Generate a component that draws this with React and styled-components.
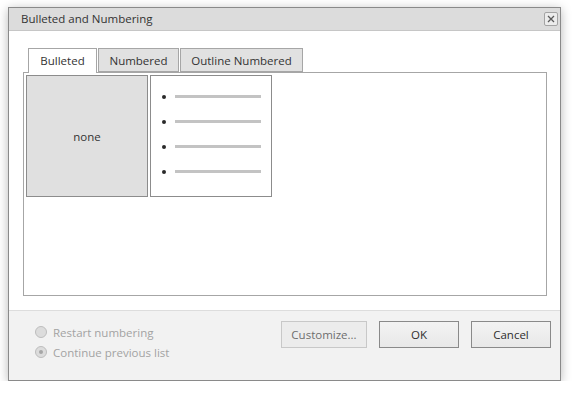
import React from "react";
import styled, { createGlobalStyle } from "styled-components";

const GlobalStyle = createGlobalStyle`
  html, body { margin: 0; padding: 0; background: #ffffff; }
  body { font-family: "Open Sans", "Liberation Sans", sans-serif; font-size: 11.5px; color: #333333; }
  * { box-sizing: border-box; }
`;

const Page = styled.div`
  padding: 7px 0 0 8px;
`;

const Dialog = styled.div`
  width: 553px;
  height: 374px;
  border: 1px solid #8a8a8a;
  background: #ffffff;
  box-shadow: 0 2px 10px rgba(0, 0, 0, 0.28);
  display: flex;
  flex-direction: column;
`;

const TitleBar = styled.div`
  height: 23px;
  flex: none;
  background: #dcdcdc;
  border-bottom: 1px solid #c6c6c6;
  display: flex;
  align-items: center;
  padding: 0 2px 0 12px;
`;

const Title = styled.div`
  flex: 1;
  color: #333333;
  font-size: 11.5px;
  line-height: 22px;
`;

const CloseButton = styled.button`
  width: 14px;
  height: 14px;
  padding: 0;
  margin: 0;
  border: 1px solid #a4a4a4;
  border-radius: 2px;
  background: #ececec;
  display: flex;
  align-items: center;
  justify-content: center;
`;

const Body = styled.div`
  height: 279px;
  flex: none;
  padding: 17px 13px 0 14px;
  display: flex;
  flex-direction: column;
`;

const TabList = styled.div`
  display: flex;
  gap: 1px;
  margin-left: 5px;
  height: 24px;
  position: relative;
  z-index: 1;
`;

const Tab = styled.div`
  width: ${(p) => p.$width}px;
  height: ${(p) => (p.$active ? "25px" : "24px")};
  border: 1px solid #a6a6a6;
  border-bottom: ${(p) => (p.$active ? "none" : "1px solid #a6a6a6")};
  background: ${(p) => (p.$active ? "#ffffff" : "#e1e1e1")};
  color: #333333;
  font-size: 11.5px;
  display: flex;
  align-items: center;
  justify-content: center;
  padding-bottom: ${(p) => (p.$active ? "1px" : "0")};
  white-space: nowrap;
`;

const TabPanel = styled.div`
  height: 224px;
  border: 1px solid #a6a6a6;
  padding: 2px;
`;

const Gallery = styled.div`
  display: flex;
  gap: 2px;
`;

const GalleryItem = styled.div`
  width: 122px;
  height: 122px;
  border: 1px solid #8c8c8c;
  background: ${(p) => (p.$empty ? "#e0e0e0" : "#ffffff")};
`;

const NoneItem = styled(GalleryItem)`
  display: flex;
  align-items: center;
  justify-content: center;
  color: #333333;
`;

const BulletItem = styled(GalleryItem)`
  padding: 8px 0 0 11px;
  display: flex;
  flex-direction: column;
`;

const BulletRow = styled.div`
  height: 25px;
  display: flex;
  align-items: center;
`;

const Dot = styled.span`
  width: 4px;
  height: 4px;
  border-radius: 50%;
  background: #2a2a2a;
  margin-right: 9px;
`;

const Line = styled.span`
  width: 86px;
  height: 3px;
  background: #c3c3c3;
`;

const Footer = styled.div`
  flex: 1;
  background: #f2f2f2;
  border-top: 1px solid #dddddd;
  display: flex;
  align-items: flex-start;
  padding: 10px 9px 0 26px;
`;

const RadioGroup = styled.div`
  display: flex;
  flex-direction: column;
  padding-top: 1px;
`;

const RadioRow = styled.label`
  height: 20px;
  display: flex;
  align-items: center;
  gap: 6px;
  color: #a3a3a3;
`;

const RadioCircle = styled.span`
  width: 12px;
  height: 12px;
  border-radius: 50%;
  border: 1px solid #bdbdbd;
  background: #dcdcdc;
  display: flex;
  align-items: center;
  justify-content: center;
  &::after {
    content: "";
    display: ${(p) => (p.$checked ? "block" : "none")};
    width: 4px;
    height: 4px;
    border-radius: 50%;
    background: #a6a6a6;
  }
`;

const Buttons = styled.div`
  margin-left: auto;
  display: flex;
  gap: 12px;
`;

const Button = styled.button`
  width: ${(p) => p.$width || 80}px;
  height: 27px;
  margin: 0;
  padding: 0;
  font-family: inherit;
  font-size: 11.5px;
  border: 1px solid ${(p) => (p.disabled ? "#c8c8c8" : "#8a8a8a")};
  background: ${(p) => (p.disabled ? "#ececec" : "linear-gradient(#f3f3f3, #e8e8e8)")};
  color: ${(p) => (p.disabled ? "#6e6e6e" : "#2e2e2e")};
`;

export default function App() {
  return (
    <>
      <GlobalStyle />
      <Page>
        <Dialog>
          <TitleBar>
            <Title>Bulleted and Numbering</Title>
            <CloseButton aria-label="Close">
              <svg width="8" height="8" viewBox="0 0 8 8">
                <path d="M1 1 L7 7 M7 1 L1 7" stroke="#5a5a5a" strokeWidth="1.3" />
              </svg>
            </CloseButton>
          </TitleBar>
          <Body>
            <TabList>
              <Tab $active $width={69}>Bulleted</Tab>
              <Tab $width={81}>Numbered</Tab>
              <Tab $width={123}>Outline Numbered</Tab>
            </TabList>
            <TabPanel>
              <Gallery>
                <NoneItem $empty>none</NoneItem>
                <BulletItem>
                  {[0, 1, 2, 3].map((i) => (
                    <BulletRow key={i}>
                      <Dot />
                      <Line />
                    </BulletRow>
                  ))}
                </BulletItem>
              </Gallery>
            </TabPanel>
          </Body>
          <Footer>
            <RadioGroup>
              <RadioRow>
                <RadioCircle />
                Restart numbering
              </RadioRow>
              <RadioRow>
                <RadioCircle $checked />
                Continue previous list
              </RadioRow>
            </RadioGroup>
            <Buttons>
              <Button disabled $width={86}>Customize...</Button>
              <Button>OK</Button>
              <Button>Cancel</Button>
            </Buttons>
          </Footer>
        </Dialog>
      </Page>
    </>
  );
}
